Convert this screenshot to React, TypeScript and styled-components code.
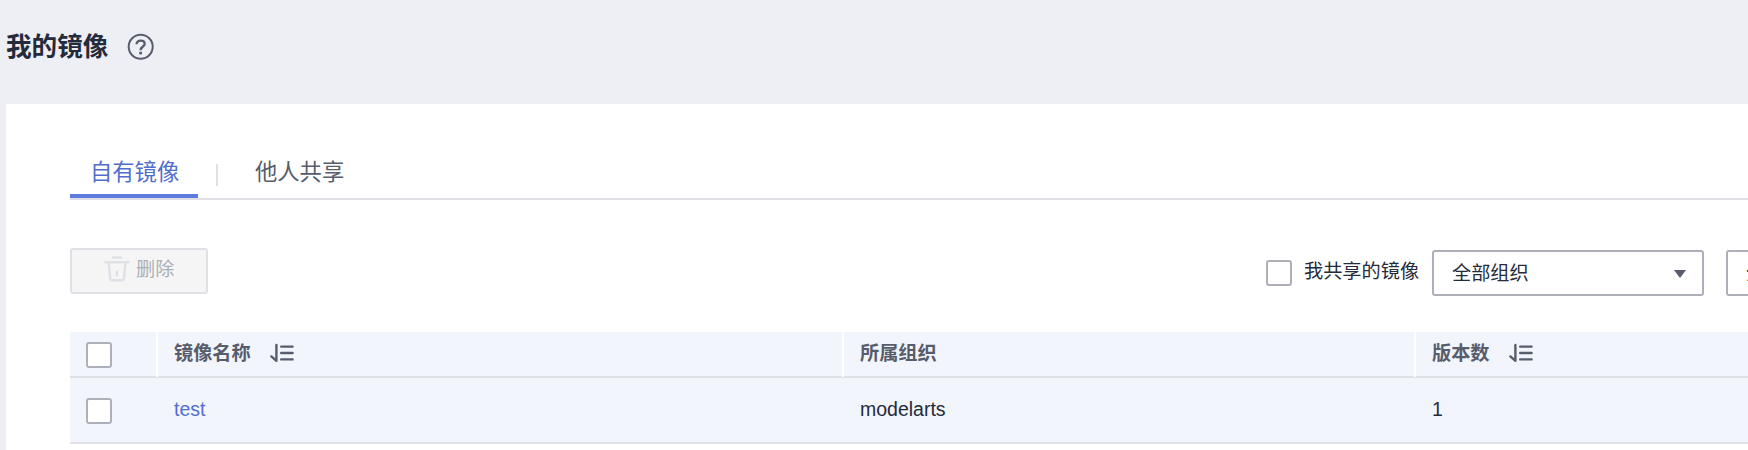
import React from 'react';
import styled, { createGlobalStyle } from 'styled-components';

const Global = createGlobalStyle`
  *, *::before, *::after { box-sizing: border-box; }
  body {
    margin: 0;
    background: #eeeff5;
    color: #252b3a;
    font-family: "Liberation Sans", "Noto Sans CJK SC", sans-serif;
    font-size: 19.2px;
    overflow: hidden;
  }
  svg { display: block; flex: none; }
`;

const Page = styled.div`
  height: 450px;
  padding-left: 6px;
  overflow: hidden;
  display: flex;
  flex-direction: column;
`;

const Header = styled.header`
  flex: none;
  height: 104px;
  display: flex;
  align-items: flex-start;
  padding-top: 33px;
`;

const Title = styled.h1`
  margin: 0;
  padding-top: 1px;
  font-size: 25.6px;
  line-height: 26px;
  font-weight: 700;
  width: 121px;
  white-space: nowrap;
`;

const Panel = styled.main`
  flex: 1;
  background: #fff;
  padding: 44px 0 0 64px;
`;

const Tabs = styled.nav`
  height: 52px;
  display: flex;
  border-bottom: 2px solid #dfe1e6;
`;

const Tab = styled.a<{ $active?: boolean }>`
  height: 50px;
  padding: 12px 0 0 20px;
  font-size: 22.3px;
  line-height: 26px;
  white-space: nowrap;
  color: ${p => (p.$active ? '#526ecc' : '#575d6c')};
  border-bottom: 4px solid ${p => (p.$active ? '#5e7ce0' : 'transparent')};
  width: 128px;
`;

const TabDivider = styled.span`
  width: 2px;
  height: 22px;
  margin: 16px 17px 0 18px;
  background: #dfe1e6;
`;

const Toolbar = styled.div`
  height: 132px;
  display: flex;
  align-items: flex-start;
  padding-top: 48px;
  overflow: hidden;
`;

const DeleteButton = styled.button`
  flex: none;
  width: 138px;
  height: 46px;
  padding: 0 0 2px 32px;
  display: flex;
  align-items: center;
  gap: 6px;
  border: 2px solid #dfe1e6;
  border-radius: 3px;
  background: #f5f5f6;
  color: #adb0b8;
  font: inherit;
  line-height: 24px;
  white-space: nowrap;

  svg { margin-bottom: 3px; }
`;

const Filters = styled.div`
  flex: none;
  display: flex;
  margin: 2px 0 0 1058px;
`;

const CheckLabel = styled.label`
  display: flex;
  width: 166px;
  gap: 12px;
  padding-top: 10px;
  line-height: 24px;
  white-space: nowrap;
`;

const Checkbox = styled.span`
  display: block;
  flex: none;
  width: 26px;
  height: 26px;
  border: 2px solid #adb0b8;
  border-radius: 3px;
  background: #fff;
`;

const Select = styled.div`
  flex: none;
  display: flex;
  align-items: flex-start;
  justify-content: space-between;
  width: 272px;
  height: 46px;
  margin-right: 22px;
  padding: 10px 16px 0 18px;
  border: 2px solid #adb0b8;
  border-radius: 3px;
  background: #fff;
  line-height: 24px;
  white-space: nowrap;

  svg { margin-top: 8px; }
`;

const Row = styled.div<{ $head?: boolean }>`
  display: grid;
  grid-template-columns: 88px 686px 572px 1fr;
  height: ${p => (p.$head ? 46 : 66)}px;
  background: #f2f5fc;
  border-bottom: 2px solid #dfe1e6;
`;

const HeadCell = styled.div`
  display: flex;
  align-items: flex-start;
  gap: 19px;
  padding: 10px 0 0 16px;
  line-height: 24px;
  font-weight: 700;
  color: #575d6c;
  white-space: nowrap;

  &:not(:last-child) { border-right: 2px solid #fff; margin-bottom: -1px; }
`;

const Cell = styled.div`
  padding: 20px 0 0 16px;
  line-height: 22px;
  font-size: 19.5px;
`;

const ImageLink = styled.a`
  color: #526ecc;
`;

const HelpIcon = () => (
  <svg width="28" height="28" viewBox="0 0 28 28" fill="none" stroke="#575d6c" strokeWidth="2">
    <circle cx="13.7" cy="13.8" r="12" />
    <path d="M9.6 11.3C9.6 8.8 11.2 7.6 13.7 7.6C16.2 7.6 17.7 8.9 17.7 10.9C17.7 13.7 13.6 13.4 13.6 17.3" strokeWidth="2.3" />
    <path d="M12.2 20.1h2.8" strokeWidth="2.6" />
  </svg>
);

const TrashIcon = () => (
  <svg width="26" height="26" viewBox="0 0 26 26" fill="none" stroke="#dfe1e6" strokeWidth="2.5" strokeLinecap="round" strokeLinejoin="round">
    <path d="M9 1.6h8M1.5 6.3h23M4.8 6.5L6.2 22.3Q6.4 24.3 8.4 24.3H17.8Q19.8 24.3 20 22.3L21.4 6.5M12.9 15.8v3.8" />
  </svg>
);

const SortIcon = () => (
  <svg width="24" height="22" viewBox="0 0 24 22" fill="none" stroke="#575d6c" strokeWidth="2.4" strokeLinecap="round" strokeLinejoin="round">
    <path d="M6.4 3V18.8L1.4 14.4M11.2 4.6h11.4M11.2 11h11.4M11.2 17.4h11.4" />
  </svg>
);

const Caret = () => (
  <svg width="12" height="8" viewBox="0 0 12 8">
    <path d="M0 0h12L6 8z" fill="#575d6c" />
  </svg>
);

export default function App() {
  return (
    <Page>
      <Global />
      <Header>
        <Title>我的镜像</Title>
        <HelpIcon />
      </Header>
      <Panel>
        <Tabs>
          <Tab $active>自有镜像</Tab>
          <TabDivider />
          <Tab>他人共享</Tab>
        </Tabs>
        <Toolbar>
          <DeleteButton disabled><TrashIcon />删除</DeleteButton>
          <Filters>
            <CheckLabel><Checkbox />我共享的镜像</CheckLabel>
            <Select>全部组织<Caret /></Select>
            <Select>全部<Caret /></Select>
          </Filters>
        </Toolbar>
        <Row $head>
          <HeadCell><Checkbox /></HeadCell>
          <HeadCell>镜像名称<SortIcon /></HeadCell>
          <HeadCell>所属组织</HeadCell>
          <HeadCell>版本数<SortIcon /></HeadCell>
        </Row>
        <Row>
          <Cell><Checkbox /></Cell>
          <Cell><ImageLink>test</ImageLink></Cell>
          <Cell>modelarts</Cell>
          <Cell>1</Cell>
        </Row>
      </Panel>
    </Page>
  );
}
